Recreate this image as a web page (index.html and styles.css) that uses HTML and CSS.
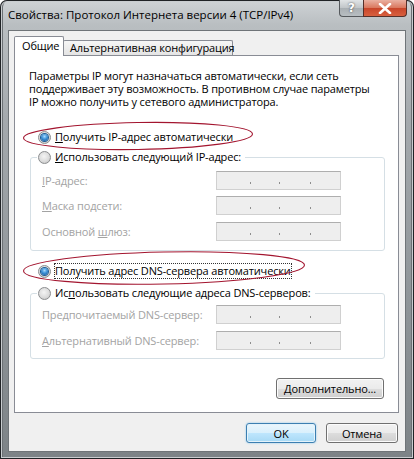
FILE: index.html
```html
<!DOCTYPE html>
<html lang="ru">
<head>
<meta charset="utf-8">
<link rel="stylesheet" href="styles.css">
</head>
<body>
<div class="window">
  <div class="titlebar">
    <span class="title">Свойства: Протокол Интернета версии 4 (TCP/IPv4)</span>
    <div class="caption-btns">
      <div class="cbtn help">?</div>
      <div class="cbtn close">
        <svg width="14" height="11" viewBox="0 0 14 11"><path d="M2 1 L12 10 M12 1 L2 10" stroke="#fff" stroke-width="2.6" stroke-linecap="round"/></svg>
      </div>
    </div>
  </div>
  <div class="client">
    <div class="tabs">
      <div class="tab active">Общие</div>
      <div class="tab">Альтернативная конфигурация</div>
    </div>
    <div class="panel">
      <p class="desc"><span>Параметры IP могут назначаться автоматически, если сеть</span><span>поддерживает эту возможность. В противном случае параметры</span><span>IP можно получить у сетевого администратора.</span></p>

      <div class="opt opt-top"><span class="radio on"></span><span class="lbl"><u>П</u>олучить IP-адрес автоматически</span></div>

      <div class="group g1">
        <div class="group-head"><div class="opt"><span class="radio"></span><span class="lbl"><u>И</u>спользовать следующий IP-адрес:</span></div></div>
        <div class="frow r1"><span class="flabel"><u>I</u>P-адрес:</span><div class="ipbox"><i></i><i></i><i></i></div></div>
        <div class="frow r2"><span class="flabel"><u>М</u>аска подсети:</span><div class="ipbox"><i></i><i></i><i></i></div></div>
        <div class="frow r3"><span class="flabel">Основной <u>ш</u>люз:</span><div class="ipbox"><i></i><i></i><i></i></div></div>
      </div>

      <div class="opt opt-dns"><span class="radio on"></span><span class="lbl focus">Получить адрес DNS-сервера автоматически</span></div>

      <div class="group g2">
        <div class="group-head"><div class="opt"><span class="radio"></span><span class="lbl">Ис<u>п</u>ользовать следующие адреса DNS-серверов:</span></div></div>
        <div class="frow d1"><span class="flabel">Пре<u>д</u>почитаемый DNS-сервер:</span><div class="ipbox"><i></i><i></i><i></i></div></div>
        <div class="frow d2"><span class="flabel"><u>А</u>льтернативный DNS-сервер:</span><div class="ipbox"><i></i><i></i><i></i></div></div>
      </div>

      <div class="btn adv"><u>Д</u>ополнительно...</div>

      <svg class="marks" width="385" height="358" viewBox="0 0 385 358">
        <ellipse cx="124" cy="81" rx="114.5" ry="13.5" transform="rotate(-1 124 81)" fill="none" stroke="#a3152f" stroke-width="1.1"/>
        <ellipse cx="150" cy="213" rx="140.5" ry="16" transform="rotate(-1.2 150 213)" fill="none" stroke="#a3152f" stroke-width="1.1"/>
      </svg>
    </div>
    <div class="dlg-btns">
      <div class="btn default">OK</div>
      <div class="btn">Отмена</div>
    </div>
  </div>
</div>
</body>
</html>
```

FILE: styles.css
```css
* { box-sizing: border-box; }
html, body { margin: 0; padding: 0; background: #fff; }
body { font-family: "Open Sans", "Noto Sans", sans-serif; font-size: 11px; color: #000; letter-spacing: -0.15px; }

.window {
  width: 414px;
  height: 459px;
  display: flex;
  flex-direction: column;
  border-radius: 7px 7px 0 0;
  background: linear-gradient(180deg, #cfd3d6 0px, #b9bec1 25px, #a4a9ad 120px, #8f9599 300px, #7d8387 459px);
  box-shadow: inset 0 0 0 1px #202326, inset 0 0 0 2px #c9cdd0, inset 3px 0 0 #6b7074, inset -3px 0 0 #6b7074;
}

.titlebar {
  height: 30px;
  display: flex;
  align-items: flex-start;
  padding: 0 7px 0 8px;
}
.title {
  margin-top: 6px;
  font-size: 11.5px;
  letter-spacing: 0;
  line-height: 17px;
  color: #000;
  white-space: nowrap;
}
.caption-btns { margin-left: auto; display: flex; }
.cbtn {
  height: 17px;
  display: flex;
  align-items: center;
  justify-content: center;
}
.help {
  width: 24px;
  background: linear-gradient(180deg, #e1e4e6, #c0c5c8 50%, #a9afb3 51%, #b8bec2);
  border: 1px solid #55595d;
  border-top: none;
  border-right: none;
  border-radius: 0 0 0 4px;
  color: #fff;
  font-family: "DejaVu Sans", sans-serif;
  font-weight: bold;
  font-size: 12px;
  text-shadow: 0 0 2px #333;
}
.close {
  width: 44px;
  background: linear-gradient(180deg, #eab1a2, #d9765c 50%, #c8452a 51%, #d8603e);
  border: 1px solid #55302a;
  border-top: none;
  border-radius: 0 0 4px 0;
}

.client {
  margin: 0 8px;
  height: 422px;
  border: 1px solid #6f7478;
  background: #f0f0f0;
  padding: 5px 6px 0 5px;
  display: flex;
  flex-direction: column;
}

.tabs {
  display: flex;
  align-items: flex-start;
  height: 20px;
}
.tab {
  height: 15px;
  margin-top: 4px;
  width: 170px;
  margin-left: -1px;
  border: 1px solid #898c95;
  border-bottom: none;
  border-radius: 2px 2px 0 0;
  background: linear-gradient(180deg, #f6f6f6, #e4e4e4);
  font-size: 11px;
  line-height: 13px;
  padding-left: 6px;
  white-space: nowrap;
}
.tab.active {
  position: relative;
  z-index: 1;
  width: 50px;
  height: 20px;
  margin-top: 0;
  margin-left: 0;
  background: #fff;
  padding-left: 7px;
  line-height: 17px;
}

.panel {
  position: relative;
  margin-top: -1px;
  width: 385px;
  height: 358px;
  border: 1px solid #898c95;
  background: #fff;
  display: flex;
  flex-direction: column;
}

.desc {
  margin: 13px 0 0 14px;
  line-height: 13px;
  display: flex;
  flex-direction: column;
  white-space: nowrap;
}
.desc span { height: 13px; }

.opt {
  display: flex;
  align-items: center;
  height: 16px;
  white-space: nowrap;
}
.opt-top { margin: 21px 0 0 23px; }
.opt-dns { margin: 12px 0 0 23px; }
.lbl { margin-left: 4px; line-height: 14px; }
.lbl.focus { outline: 1px dotted #333; outline-offset: 0; }

.radio {
  width: 13px;
  height: 13px;
  border-radius: 50%;
  border: 1px solid #8b8d8f;
  background: radial-gradient(circle at 45% 40%, #f4f4f4 0%, #dcdcdc 55%, #bdbdbd 100%);
  display: flex;
  align-items: center;
  justify-content: center;
  flex: none;
}
.radio.on::after {
  content: "";
  width: 7px;
  height: 7px;
  border-radius: 50%;
  background: radial-gradient(circle at 50% 35%, #a9dcff 0%, #3e93d8 45%, #0c4f96 100%);
  box-shadow: 0 0 0 1px #1d5c95;
}

.group {
  margin-left: 15px;
  width: 355px;
  border: 1px solid #d5dfe5;
  border-radius: 3px;
  display: flex;
  flex-direction: column;
  padding-left: 6px;
}
.g1 { margin-top: 12px; height: 94px; }
.g2 { margin-top: 14px; height: 66px; }
.group-head {
  margin-top: -9px;
  display: flex;
}
.group-head .opt {
  background: #fff;
  padding: 0 4px 0 1px;
}

.frow {
  display: flex;
  align-items: center;
  height: 19px;
  padding-left: 5px;
}
.r1 { margin-top: 6px; }
.r2 { margin-top: 6px; }
.r3 { margin-top: 7px; }
.d1 { margin-top: 4px; }
.d2 { margin-top: 7px; }

.flabel {
  width: 174px;
  color: #a3a3a3;
  white-space: nowrap;
}
.ipbox {
  width: 125px;
  height: 19px;
  background: #eeeeee;
  border: 1px solid #d0d0d0;
  border-top-color: #aeaeae;
  display: flex;
  align-items: flex-end;
  padding: 0 0 5px 33px;
}
.ipbox i {
  width: 1px;
  height: 2px;
  background: #8e8e8e;
}
.ipbox i + i { margin-left: 28px; }
.ipbox i + i + i { margin-left: 30px; }

.btn {
  height: 20px;
  border: 1px solid #707070;
  border-radius: 3px;
  background: linear-gradient(180deg, #f2f2f2 0%, #ebebeb 50%, #dddddd 51%, #cfcfcf 100%);
  box-shadow: inset 0 0 0 1px #fcfcfc;
  display: flex;
  align-items: center;
  justify-content: center;
  white-space: nowrap;
  font-size: 11px;
}
.adv {
  width: 108px;
  height: 21px;
  align-self: flex-end;
  margin: 19px 14px 0 0;
}

.dlg-btns {
  margin-top: 10px;
  display: flex;
  justify-content: flex-end;
  gap: 10px;
  padding-right: 1px;
}
.dlg-btns .btn { width: 72px; }
.dlg-btns .btn.default {
  width: 70px;
  border-color: #3c7fb1;
  background: linear-gradient(180deg, #eaf6fd 0%, #d9f0fc 50%, #bee6fd 51%, #a7d9f5 100%);
  box-shadow: inset 0 0 0 1px #e4f3fb, 0 0 2px #7fc3ec;
}

.marks {
  position: absolute;
  left: -1px;
  top: -1px;
  pointer-events: none;
}
```
